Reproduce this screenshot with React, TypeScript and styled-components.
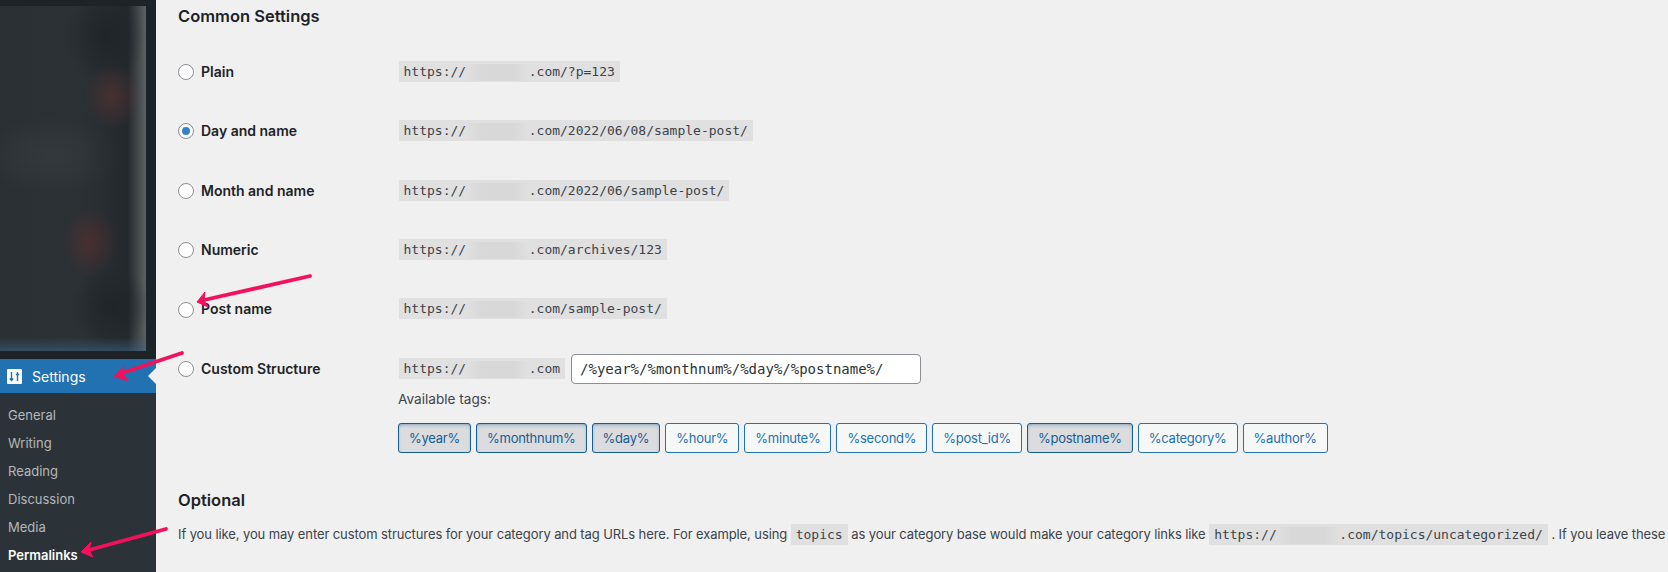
import React from "react";
import styled, { createGlobalStyle } from "styled-components";

const GlobalStyle = createGlobalStyle`
  html, body {
    margin: 0;
    padding: 0;
    height: 572px;
    overflow: hidden;
    background: #f0f0f0;
  }
`;

const Page = styled.div`
  position: relative;
  display: flex;
  width: 1668px;
  height: 572px;
  overflow: hidden;

  font-family: Inter, "Noto Sans", sans-serif;
  font-size: 13px;
  color: #3c434a;
`;

const Sidebar = styled.aside`
  display: flex;
  flex-direction: column;
  flex: none;

  width: 156px;
  height: 572px;

  background-color: #1d2327;
`;

const BlurredMenu = styled.div`
  width: 146px;
  height: 345px;
  margin: 6px 0 8px;

  background:
    radial-gradient(ellipse 30px 34px at 113px 90px, rgba(105, 52, 52, 0.5), transparent),
    radial-gradient(ellipse 28px 36px at 90px 236px, rgba(105, 45, 45, 0.5), transparent),
    linear-gradient(0deg, rgba(60, 95, 125, 0.6) 0, transparent 14px),
    radial-gradient(ellipse 40px 50px at 105px 30px, rgba(29, 35, 39, 0.8), transparent),
    radial-gradient(ellipse 40px 40px at 110px 300px, rgba(29, 35, 39, 0.8), transparent),
    radial-gradient(ellipse 70px 40px at 50px 150px, rgba(70, 75, 80, 0.3), transparent),
    linear-gradient(90deg, #2a3034 0, #2b3135 80px, #23292d 128px, #5c6163 146px);
`;

const ActiveItem = styled.div`
  position: relative;
  display: flex;
  align-items: center;
  gap: 10px;

  height: 34px;
  padding-left: 7px;

  font-size: 14px;
  color: white;
  background-color: #2271b1;

  &::after {
    content: "";
    position: absolute;
    right: 0;
    top: 9px;
    border: 8px solid transparent;
    border-right-color: #f0f0f0;
  }
`;

const SubMenu = styled.nav`
  display: flex;
  flex-direction: column;
  flex: 1;

  padding-top: 8px;

  background-color: #2c3338;
`;

const SubLink = styled.a<{ $current?: boolean }>`
  display: flex;
  align-items: center;

  height: 28px;
  padding-left: 8px;

  font-size: 13px;
  font-weight: ${({ $current }) => ($current ? 600 : 400)};
  color: ${({ $current }) => ($current ? "white" : "#b4b8bb")};
`;

const Main = styled.main`
  flex: 1;
  min-width: 0;
  padding-left: 22px;
`;

const Heading = styled.h2<{ $top?: number }>`
  margin: ${({ $top }) => $top ?? 0}px 0 0;

  font-size: 16.5px;
  font-weight: 600;
  line-height: 32px;
  color: #1d2327;
`;

const Options = styled.div`
  display: flex;
  flex-direction: column;
  gap: 29.4px;

  margin-top: 25px;
`;

const OptionRow = styled.div`
  display: grid;
  grid-template-columns: 220.5px 1fr;
  align-items: center;

  min-height: 30px;
`;

const OptionLabel = styled.label`
  display: flex;
  align-items: center;
  gap: 7px;

  font-size: 14px;
  font-weight: 600;
  line-height: 16px;
  color: #1d2327;
`;

const LabelText = styled.span`
  position: relative;
  top: -0.2px;
`;

const Radio = styled.input.attrs({ type: "radio" })`
  display: flex;
  align-items: center;
  justify-content: center;
  flex: none;

  box-sizing: border-box;
  width: 16px;
  height: 16px;
  margin: 0;

  appearance: none;
  background-color: white;
  border: 1px solid #8c8f94;
  border-radius: 50%;

  &:checked::before {
    content: "";
    width: 8px;
    height: 8px;
    border-radius: 50%;
    background-color: #3582c4;
  }
`;

const UrlCell = styled.div`
  display: flex;
  margin-bottom: 1.5px;
`;

const Code = styled.code`
  display: inline-block;

  height: 21px;
  padding: 0 5px;

  font-family: "DejaVu Sans Mono", monospace;
  font-size: 13px;
  line-height: 21px;
  letter-spacing: 0;
  white-space: pre;
  color: #3c434a;
  background-color: #e0e0e0;
`;

const Redacted = styled.span`
  display: inline-block;
  width: 8ch;
  height: 17px;
  vertical-align: middle;

  background: linear-gradient(90deg, #e0e0e0, #d8d8d9 25%, #d8d8d9 75%, #e0e0e0);
`;

const CustomFields = styled.div`
  display: flex;
  align-items: center;
  gap: 6px;
`;

const StructureInput = styled.input`
  box-sizing: border-box;
  width: 350px;
  height: 30px;
  padding: 0 8px;

  font-family: "DejaVu Sans Mono", monospace;
  font-size: 14px;
  color: #2c3338;
  background-color: white;
  border: 1px solid #8c8f94;
  border-radius: 4px;
`;

const TagsBlock = styled.div`
  margin: 5px 0 0 220px;
`;

const TagsTitle = styled.div`
  font-size: 13.6px;
  line-height: 20px;
`;

const TagsList = styled.div`
  display: flex;
  gap: 5px;

  margin-top: 14px;
`;

const TagButton = styled.button<{ $active?: boolean }>`
  box-sizing: border-box;
  height: 30px;
  padding: 0 10px;

  font-family: inherit;
  font-size: 13px;
  letter-spacing: -0.25px;
  color: ${({ $active }) => ($active ? "#135e96" : "#2271b1")};
  background-color: ${({ $active }) => ($active ? "#dcdcde" : "#f6f7f7")};
  border: 1px solid ${({ $active }) => ($active ? "#135e96" : "#2271b1")};
  border-radius: 3px;
  box-shadow: ${({ $active }) =>
    $active ? "inset 0 2px 5px -3px #135e96" : "none"};
`;

const Description = styled.p`
  margin: 8px 0 0;

  font-size: 13px;
  line-height: 21px;
  letter-spacing: -0.1px;
  white-space: nowrap;
`;

const Arrows = styled.svg`
  position: absolute;
  top: 0;
  left: 0;
  pointer-events: none;
`;

const options = [
  { label: "Plain", tail: ".com/?p=123" },
  { label: "Day and name", tail: ".com/2022/06/08/sample-post/", checked: true },
  { label: "Month and name", tail: ".com/2022/06/sample-post/" },
  { label: "Numeric", tail: ".com/archives/123" },
  { label: "Post name", tail: ".com/sample-post/" },
];

const tags = [
  { name: "%year%", active: true },
  { name: "%monthnum%", active: true },
  { name: "%day%", active: true },
  { name: "%hour%" },
  { name: "%minute%" },
  { name: "%second%" },
  { name: "%post_id%" },
  { name: "%postname%", active: true },
  { name: "%category%" },
  { name: "%author%" },
];

const menuLinks = ["General", "Writing", "Reading", "Discussion", "Media"];

const SettingsIcon = () => (
  <svg width="15" height="15" viewBox="0 0 15 15">
    <rect width="15" height="15" rx="1" fill="white" />
    <path
      d="M4.5 3v9M2.8 9.5 4.5 11.5 6.2 9.5M10.5 3v9M8.8 5.5h3.4"
      stroke="#2271b1"
      strokeWidth="1.4"
      fill="none"
    />
  </svg>
);

const Arrow = ({ line, head }: { line: string; head: string }) => (
  <g fill="#f5105c" stroke="#f5105c">
    <path d={line} strokeWidth="3.8" strokeLinecap="round" fill="none" />
    <polygon points={head} strokeWidth="1" strokeLinejoin="round" />
  </g>
);

const Url = ({ tail }: { tail: string }) => (
  <Code>
    https://
    <Redacted />
    {tail}
  </Code>
);

const App = () => {
  return (
    <Page>
      <GlobalStyle />
      <Sidebar>
        <BlurredMenu />
        <ActiveItem>
          <SettingsIcon />
          Settings
        </ActiveItem>
        <SubMenu>
          {menuLinks.map((link) => (
            <SubLink key={link}>{link}</SubLink>
          ))}
          <SubLink $current>Permalinks</SubLink>
        </SubMenu>
      </Sidebar>
      <Main>
        <Heading>Common Settings</Heading>
        <Options>
          {options.map((option) => (
            <OptionRow key={option.label}>
              <OptionLabel>
                <Radio name="permalink" defaultChecked={option.checked} />
                <LabelText>{option.label}</LabelText>
              </OptionLabel>
              <UrlCell>
                <Url tail={option.tail} />
              </UrlCell>
            </OptionRow>
          ))}
          <OptionRow>
            <OptionLabel>
              <Radio name="permalink" />
              <LabelText>Custom Structure</LabelText>
            </OptionLabel>
            <CustomFields>
              <Url tail=".com" />
              <StructureInput defaultValue="/%year%/%monthnum%/%day%/%postname%/" />
            </CustomFields>
          </OptionRow>
        </Options>
        <TagsBlock>
          <TagsTitle>Available tags:</TagsTitle>
          <TagsList>
            {tags.map((tag) => (
              <TagButton key={tag.name} $active={tag.active}>
                {tag.name}
              </TagButton>
            ))}
          </TagsList>
        </TagsBlock>
        <Heading $top={31}>Optional</Heading>
        <Description>
          If you like, you may enter custom structures for your category and tag
          URLs here. For example, using <Code>topics</Code> as your category base
          would make your category links like{" "}
          <Code>
            https://
            <Redacted />
            .com/topics/uncategorized/
          </Code>{" "}
          . If you leave these blank the defaults will be used.
        </Description>
      </Main>
      <Arrows width="1668" height="572" viewBox="0 0 1668 572">
        <Arrow line="M310 276 L204 300" head="197,302 205,292 204,300 208,307" />
        <Arrow line="M182 353 L122 373" head="114,376 124,366 122,373 128,381" />
        <Arrow line="M166 529 L89 550" head="81,552 91,542 89,550 93,557" />
      </Arrows>
    </Page>
  );
};

export default App;
